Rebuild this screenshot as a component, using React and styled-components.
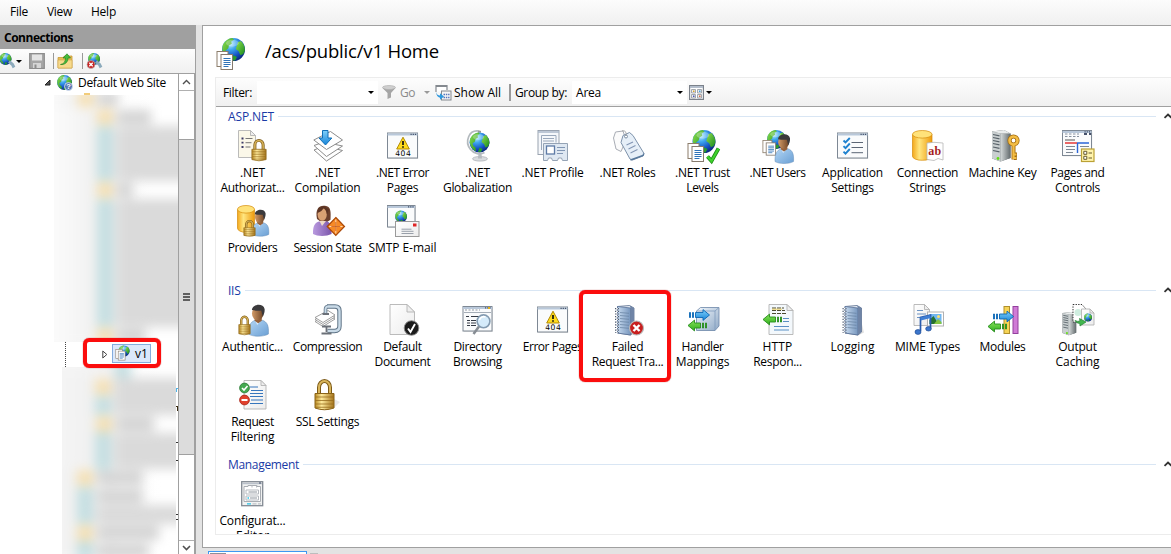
import React, { useLayoutEffect, useRef } from "react";
import styled, { createGlobalStyle } from "styled-components";

const GlobalStyle = createGlobalStyle`
  * { box-sizing: border-box; }
  html, body { margin: 0; height: 100%; overflow: hidden; }
  body {
    background: #e3e3e3;
    color: #000;
    font: 12px/15px "Open Sans", "Noto Sans", sans-serif;
  }
  #root { height: 100%; }
  svg { display: block; flex: none; }
`;

/* ---------- text set to a known advance width ---------- */

const TextSpan = styled.span`
  display: inline-block;
  white-space: nowrap;
`;

function Text({ w, children, className }) {
  const ref = useRef(null);
  useLayoutEffect(() => {
    const el = ref.current;
    el.style.letterSpacing = "0px";
    const natural = el.getBoundingClientRect().width;
    el.style.letterSpacing = `${(w - natural) / children.length}px`;
  }, [w, children]);
  return (
    <TextSpan ref={ref} className={className}>
      {children}
    </TextSpan>
  );
}

/* ---------- frame ---------- */

const Window = styled.div`
  display: flex;
  flex-direction: column;
  width: 1171px;
  height: 554px;
  overflow: hidden;
`;

const MenuBar = styled.nav`
  display: flex;
  flex: none;
  gap: 19px;
  height: 25px;
  padding: 4px 0 0 10px;
  background: linear-gradient(#fcfcfc, #f0f0f0);
`;

const Body = styled.div`
  display: flex;
  flex: 1;
  min-height: 0;
  gap: 6px;
`;

/* ---------- connections pane ---------- */

const Sidebar = styled.aside`
  position: relative;
  display: flex;
  flex-direction: column;
  flex: none;
  width: 196px;
  border-right: 1px solid #a0a0a0;
`;

const SidebarTitle = styled.h2`
  flex: none;
  height: 24px;
  margin: 0;
  padding: 5px 0 0 4px;
  background: #a0a0a0;
  font-size: 12px;
  line-height: 15px;
  font-weight: 700;
`;

const SideTools = styled.div`
  display: flex;
  flex: none;
  align-items: center;
  height: 25px;
  border-bottom: 1px solid #a0a0a0;
  background: linear-gradient(#fdfdfd, #f0f0f0);
`;

const ToolSlot = styled.div`
  flex: none;
  width: ${(p) => p.$w}px;
`;

const Separator = styled.i`
  flex: none;
  width: 1.5px;
  height: ${(p) => p.$h || 16}px;
  margin: 0 ${(p) => p.$right || 0}px 0 ${(p) => p.$left || 0}px;
  background: #999;
`;

const TreeArea = styled.div`
  display: flex;
  flex: 1;
  min-height: 0;
  background: #fff;
`;

const Tree = styled.div`
  flex: none;
  width: 178px;
  overflow: hidden;
`;

const TreeRow = styled.div`
  display: flex;
  align-items: center;
  height: ${(p) => p.$h}px;
  padding-left: ${(p) => p.$indent}px;
  gap: ${(p) => p.$gap || 0}px;
`;

const Guide = styled.i`
  flex: none;
  align-self: stretch;
  width: 0;
  margin-right: 36px;
  border-left: 1px dotted #444;
`;

const SelectedNode = styled.div`
  display: flex;
  align-items: center;
  gap: 4px;
  width: 39px;
  height: 19px;
  margin-top: -3px;
  padding-left: 2px;
  border: 1px solid #84acdd;
  background: #dbe8fb;
`;

const Hidden = styled.div`
  height: ${(p) => p.$h}px;
  margin-left: ${(p) => p.$left}px;
  width: ${(p) => p.$w}px;
  overflow: hidden;
  background: linear-gradient(90deg, #f8f8f8 0, #f6f6f6 18px, #fdfdfd 60px, #fff 100px);
`;

const HiddenRows = styled.div`
  margin: ${(p) => p.$top}px -20px 0 -20px;
  filter: blur(5.5px);
`;

const HiddenRow = styled.div`
  display: flex;
  align-items: center;
  height: 18.2px;
`;

const HiddenPad = styled.i`
  align-self: stretch;
  width: ${(p) => p.$w}px;
  background: linear-gradient(90deg, ${(p) => p.$from} 40%, #f0f0f0);
`;

const HiddenIcon = styled.i`
  width: 16px;
  height: ${(p) => (p.$folder ? 16 : 19)}px;
  background: ${(p) => (p.$folder ? "#f5e0b4" : "#c5dfe2")};
`;

const HiddenText = styled.i`
  width: ${(p) => p.$w}px;
  height: ${(p) => (p.$full ? 18.4 : 14)}px;
  border-left: 6px solid #e6e6e6;
  background: ${(p) => (p.$full ? "#dadada" : "#d3d3d3")};
`;

const ScrollBar = styled.div`
  display: flex;
  flex-direction: column;
  flex: none;
  width: 17px;
  border: solid #a0a0a0;
  border-width: 0 1px;
`;

const ScrollButton = styled.div`
  display: flex;
  align-items: center;
  justify-content: center;
  flex: none;
  height: ${(p) => p.$h}px;
  border: solid #b0b0b0;
  border-width: ${(p) => (p.$down ? "1px 0 0" : "0 0 1px")};
`;

const ScrollThumb = styled.div`
  display: flex;
  flex-direction: column;
  align-items: center;
  justify-content: center;
  gap: 1px;
  height: 316px;
  margin: 48px 0 auto;
  border: solid #a0a0a0;
  border-width: 1px 0;
  background: #dcdcdc;
`;

const Grip = styled.i`
  width: 7px;
  height: 2px;
  background: #606060;
`;

const Highlight = styled.div`
  position: absolute;
  left: ${(p) => p.$x}px;
  top: ${(p) => p.$y}px;
  width: ${(p) => p.$w}px;
  height: ${(p) => p.$h}px;
  border: 4px solid #fb0d0d;
  border-radius: 6px;
  box-shadow: 0 0 1px #a01010;
`;

const CutText = styled.svg`
  position: absolute;
  left: 176px;
  top: 350px;
`;

/* ---------- feature view ---------- */

const Main = styled.main`
  display: flex;
  flex-direction: column;
  flex: 1;
  min-width: 0;
`;

const Page = styled.section`
  flex: none;
  height: 523px;
  padding: 12px 0 0 12px;
  border: solid #a0a0a0;
  border-width: 1px 0 1px 1px;
  background: #fff;
`;

const PageHeader = styled.header`
  display: flex;
  gap: 17px;
  height: 39px;
  padding-left: 1px;
`;

const PageTitle = styled.h1`
  margin: 0;
  font-size: 18.5px;
  line-height: 26px;
  font-weight: 400;
`;

const Panel = styled.div`
  position: relative;
  height: 458px;
  border: solid #ececec;
  border-width: 1px 0 1px 1px;
`;

const FilterBar = styled.div`
  display: flex;
  align-items: center;
  height: 29px;
  padding-left: 7px;
  border-bottom: 1px solid #a0a0a0;
  background: linear-gradient(#fdfdfd, #f0f0f0);
`;

const Combo = styled.div`
  display: flex;
  align-items: center;
  justify-content: space-between;
  flex: none;
  width: ${(p) => p.$w}px;
  height: 23px;
  margin: 0 ${(p) => p.$after}px 0 5px;
  padding: 1px 4px 0;
  background: #fff;
`;

const GoLabel = styled(Text)`
  margin: 0 9px 0 4px;
  color: #8a8a8a;
`;

const ShowAllLabel = styled(Text)`
  margin: 0 8px 0 2px;
`;

const Features = styled.div`
  height: 427px;
  overflow: hidden;
`;

const Group = styled.section`
  height: 174px;
`;

const GroupHeader = styled.header`
  display: flex;
  align-items: center;
  gap: 4px;
  height: 20px;
  padding: 0 0 2px 12px;
  color: #1a3aa6;
`;

const Rule = styled.i`
  flex: 1;
  height: 1px;
  background: #d9e6f4;
`;

const Grid = styled.div`
  display: grid;
  grid-template-columns: repeat(12, 75px);
  grid-auto-rows: 75px;
  margin-left: -1px;
`;

const Item = styled.div`
  display: flex;
  flex-direction: column;
  align-items: center;
  padding-top: 3px;
`;

const Label = styled.div`
  display: flex;
  flex-direction: column;
  align-items: center;
  margin-top: 3px;
`;

const BottomTabs = styled.div`
  display: flex;
  align-items: flex-start;
  gap: 3px;
  padding: 3px 0 0 6px;
`;

const ActiveTab = styled.div`
  width: 99px;
  height: 10px;
  padding: 1px;
  border: 1px solid #3e98f2;
  background: #fff;
`;

const TabMark = styled.i`
  display: block;
  width: ${(p) => p.$w}px;
  height: 2px;
  margin-top: ${(p) => p.$top || 0}px;
  background: ${(p) => p.$c};
`;

/* ---------- icon parts ---------- */

const Defs = () => (
  <svg width="0" height="0">
    <defs>
      <radialGradient id="sea" cx="35%" cy="25%" r="75%">
        <stop offset="0" stopColor="#bff0ff" />
        <stop offset=".35" stopColor="#3fa6ee" />
        <stop offset=".75" stopColor="#1552c4" />
        <stop offset="1" stopColor="#0d2c86" />
      </radialGradient>
      <linearGradient id="land" x1="0" y1="0" x2="1" y2="1">
        <stop offset="0" stopColor="#8fe04e" />
        <stop offset="1" stopColor="#188a1e" />
      </linearGradient>
      <linearGradient id="brass" x1="0" x2="1">
        <stop offset="0" stopColor="#b98a22" />
        <stop offset=".35" stopColor="#ffeb9c" />
        <stop offset="1" stopColor="#a5741a" />
      </linearGradient>
      <linearGradient id="drum" x1="0" x2="1">
        <stop offset="0" stopColor="#f3a81c" />
        <stop offset=".35" stopColor="#ffe680" />
        <stop offset="1" stopColor="#ee9a0c" />
      </linearGradient>
      <linearGradient id="skin" x1="0" x2="1">
        <stop offset="0" stopColor="#d29a66" />
        <stop offset="1" stopColor="#6f4526" />
      </linearGradient>
      <linearGradient id="shirt" x1="0" y1="0" x2="1" y2="1">
        <stop offset="0" stopColor="#b4d6f4" />
        <stop offset="1" stopColor="#6a9fd4" />
      </linearGradient>
      <linearGradient id="violet" x1="0" x2="1">
        <stop offset="0" stopColor="#b99adf" />
        <stop offset="1" stopColor="#7b56ab" />
      </linearGradient>
      <linearGradient id="steel" x1="0" x2="1">
        <stop offset="0" stopColor="#d6dbdb" />
        <stop offset="1" stopColor="#626a6c" />
      </linearGradient>
      <linearGradient id="book" x1="0" x2="1">
        <stop offset="0" stopColor="#c6d9ee" />
        <stop offset="1" stopColor="#7796bd" />
      </linearGradient>
      <linearGradient id="paper" x1="0" y1="0" x2="1" y2="1">
        <stop offset="0" stopColor="#fff" />
        <stop offset="1" stopColor="#ececec" />
      </linearGradient>
      <linearGradient id="blueArrow" x1="0" y1="0" x2="0" y2="1">
        <stop offset="0" stopColor="#7fd0fa" />
        <stop offset="1" stopColor="#1683d8" />
      </linearGradient>
      <linearGradient id="greenArrow" x1="0" y1="0" x2="0" y2="1">
        <stop offset="0" stopColor="#86e25a" />
        <stop offset="1" stopColor="#2fae1d" />
      </linearGradient>
      <linearGradient id="cube" x1="0" y1="0" x2="1" y2="1">
        <stop offset="0" stopColor="#f2f7fc" />
        <stop offset="1" stopColor="#8fa9c6" />
      </linearGradient>
    </defs>
  </svg>
);

const Ico = ({ s = 32, box = 32, children }) => (
  <svg width={s} height={s} viewBox={`0 0 ${box} ${box}`} overflow="visible">
    {children}
  </svg>
);

const Globe = ({ x, y, r }) => (
  <g transform={`translate(${x} ${y}) scale(${r / 10})`}>
    <circle r="10" fill="url(#sea)" />
    <path
      d="M-9.6-2.5C-8.5-6.500-5-9.600-1-9.900L.5-8.500-2-7-1.500-5-4-3.500-4.500-1-7 1-6 3.500-4 5-3.500 8.700C-7.500 7-10.200 2.500-9.600-2.500Z"
      fill="url(#land)"
    />
    <path d="M4-6.500 6.500-7.500C9-5 10-2.500 9.900 1L8.500 4 6 5 4.500 1.500 2-.5 3-3.500Z" fill="url(#land)" />
    <path d="M0 5 3 6.500 1.500 9.500-1.500 9.500Z" fill="#2a9c2c" />
    <ellipse cx="-1" cy="-5.500" rx="5.500" ry="3" fill="#fff" opacity=".28" />
  </g>
);

const Padlock = ({ x, y, w, h }) => (
  <g transform={`translate(${x} ${y}) scale(${w / 20} ${h / 31})`}>
    <path d="M4.500 15V8.500a5.500 6.500 0 0 1 11 0V15" fill="none" stroke="#7c5a17" strokeWidth="4" />
    <path d="M4.500 15V8.500a5.500 6.500 0 0 1 11 0V15" fill="none" stroke="#d9b55a" strokeWidth="2" />
    <path d="M.5 14.500h19V29q-9.500 3.500-19 0Z" fill="url(#brass)" stroke="#8b6418" />
    <path d="M1 18h18M1 21.500h18M1 25h18M1 28.300h18" stroke="#94691a" strokeWidth="1.100" opacity=".75" />
  </g>
);

const Frame = ({ x = 0.5, y = 3, w = 30, h = 25 }) => (
  <g>
    <rect x={x + 0.7} y={y + 0.8} width={w} height={h} fill="#000" opacity=".15" />
    <rect x={x} y={y} width={w} height={h} fill="#fafbfc" stroke="#7e8894" />
    <path d={`M${x} ${y + 1.5}h${w}`} stroke="#b9c8da" strokeWidth="2" />
    <path d={`M${x + w - 7} ${y + 1.3}h6`} stroke="#44526b" strokeWidth="1.200" strokeDasharray="1.200 1" />
  </g>
);

const Warning404 = () => (
  <Ico>
    <Frame />
    <path d="M16 7.200 22.300 19H9.700Z" fill="#ffdc1c" stroke="#b28a05" strokeLinejoin="round" />
    <path d="M16 11v4M16 16.300v1.500" stroke="#111" strokeWidth="1.700" />
    <text x="16" y="26.400" fontSize="7.600" textAnchor="middle" textLength="15.500" fontFamily="DejaVu Sans">
      404
    </text>
  </Ico>
);

const Sheet = ({ x, y, w, h, fill = "url(#paper)", fold = 5 }) => (
  <g stroke="#b3b3b3" strokeWidth=".9">
    <path d={`M${x} ${y}h${w - fold}l${fold} ${fold}v${h - fold}h${-w}Z`} fill={fill} />
    <path d={`M${x + w - fold} ${y}v${fold}h${fold}Z`} fill="#eee" />
  </g>
);

const Pages2 = ({ x, y, k = 1 }) => (
  <g transform={`translate(${x} ${y}) scale(${k})`}>
    <rect x=".5" y=".5" width="11" height="15" fill="#fff" stroke="#8b7d6b" />
    <rect x="4.500" y="3.500" width="11.500" height="15" fill="#fff" stroke="#857a6e" />
    <path d="M7 7.500h7M7 9.500h7M7 11.500h7M7 13.500h7M7 15.500h5" stroke="#2e72b8" strokeWidth="1" />
  </g>
);

const Person = ({ x, y, k = 1 }) => (
  <g transform={`translate(${x} ${y}) scale(${k})`}>
    <path d="M0 29c-.3-8 2-12 6.500-13.500l7 0c5 1.500 6.500 5.500 6 13.500-5 2.800-15 2.800-19.500 0Z" fill="url(#shirt)" stroke="#5d88b4" strokeWidth=".5" />
    <path d="M6.500 15.500 8.500 20 12.500 15.500Z" fill="#dcecfa" />
    <path d="M6 12h7v4l-3.500 2.500-3.500-2.500Z" fill="#96613a" />
    <ellipse cx="9" cy="8.800" rx="5.600" ry="6.700" fill="url(#skin)" />
    <path d="M3.300 5.500C3.500-.4 14.500-2 15.800 4.500c.3 3-.8 5.500-1.800 7.500L12.500 6Q8 6.500 3.300 5.500Z" fill="#3b3a3c" />
  </g>
);

const Drum = ({ x, y, w, h }) => (
  <g transform={`translate(${x} ${y})`} stroke="#d58c0d" strokeWidth=".7">
    <path d={`M0 4v${h - 8}a${w / 2} 4 0 0 0 ${w} 0V4`} fill="url(#drum)" />
    <ellipse cx={w / 2} cy="4" rx={w / 2} ry="3.800" fill="#ffe27a" />
  </g>
);

const Server = ({ x, y, k = 1 }) => (
  <g transform={`translate(${x} ${y}) scale(${k})`}>
    <path d="M0 1.500 12 0 18.500 3.500V28L8.500 31.500 0 28.500Z" fill="#5d6568" />
    <path d="M0 1.500 8.500 3.500V31.500L0 28.500Z" fill="#c9cfd0" />
    <path d="M1 4.500l6.500 1.300M1 7.500l6.500 1.300M1 10.500l6.500 1.300M1 13.500l6.500 1.300M1 17l6.500 1.300M1 20.500l6.500 1.300" stroke="#59636a" strokeWidth="1.200" />
    <path d="M8.500 3.500 18.500 3.500V28L8.500 31.500Z" fill="url(#steel)" />
    <path d="M0 1.500 12 0 18.500 3.500 8.500 3.500Z" fill="#e9ecec" />
    <circle cx="6" cy="28.500" r="1.400" fill="#63dd14" />
  </g>
);

const Notebook = ({ x }) => (
  <g transform={`translate(${x} 1.500)`}>
    <path d="M16 2 22 27l-6 3Z" fill="#000" opacity=".12" />
    <path d="M3 1 15 0 19.500 2.500V26.500L16 29.500 3 27.500Z" fill="#e8eef6" stroke="#56698a" strokeWidth=".8" />
    <path d="M3 1 16 2.500V29.500L3 27.500Z" fill="url(#book)" stroke="#587096" strokeWidth=".8" />
    <path d="M15 0l4.500 2.500V26.500L16 29.500V2.500Z" fill="#6f84a6" />
    <path d="M5.500 7l9 .8M5.500 10l9 .8M5.500 13l9 .8M5.500 16l9 .8M5.500 19l9 .8M5.500 22l9 .8" stroke="#64809f" strokeWidth=".7" />
    <path d="M2.500 2.500v25" stroke="#4e5b70" strokeWidth="4" strokeDasharray="1.200 1.500" />
    <path d="M2.500 2.500v25" stroke="#fff" strokeWidth="1.600" strokeDasharray="1.200 1.500" />
  </g>
);

const ArrowRight = ({ x, y }) => (
  <g transform={`translate(${x} ${y})`} fill="url(#blueArrow)" stroke="#0c66b4" strokeWidth=".9">
    <path d="M6 3.500h7.500V.6L20 6l-6.500 5.400V8.500H6Z" />
    <path d="M0 3.500h1v5H0ZM3 3.500h1v5H3Z" />
  </g>
);

const ArrowLeft = ({ x, y }) => (
  <g transform={`translate(${x} ${y})`} fill="url(#greenArrow)" stroke="#278c1e" strokeWidth=".9">
    <path d="M13 3.500H7V.6L.5 6 7 11.400V8.500h6Z" />
    <path d="M15 3.500h1v5h-1ZM18 3.500h1v5h-1Z" />
  </g>
);

const ErrorBadge = ({ x, y, r }) => (
  <g transform={`translate(${x} ${y}) scale(${r / 7})`}>
    <circle r="7" fill="#c81f1f" stroke="#b9b9b9" strokeWidth="1.200" />
    <path d="M-3-3 3 3M3-3-3 3" stroke="#fff" strokeWidth="2.400" />
  </g>
);

/* ---------- feature icons ---------- */

const icons = {
  authorization: (
    <Ico>
      <Sheet x={1.5} y={0.5} w={17} h={27} fill="#fbf8e9" />
      <path d="M8.500 8.500h7M8.500 12.700h6M8.500 17h5" stroke="#777" />
      <path d="M4.500 8.500h2M4.500 12.700h2M4.500 17h2" stroke="#3c3a66" strokeWidth="1.800" />
      <Padlock x={14.500} y={9} w={15} h={22} />
    </Ico>
  ),
  compilation: (
    <Ico>
      <g fill="#fff" stroke="#8c8c8c" strokeLinejoin="round">
        <path d="M2 20 12 16 30.500 20.500 14.500 31Z" />
        <path d="M2 15.500 12 12 30.500 16 14.500 26.500Z" />
        <path d="M1.800 10 18.500 1.500 30.500 10 14.500 19.500Z" />
      </g>
      <path d="M10.500.5h5.500v7.500h3.800L13.500 15 7 8h3.500Z" fill="url(#blueArrow)" stroke="#0f6fb9" />
    </Ico>
  ),
  errorPages: <Warning404 />,
  globalization: (
    <Ico>
      <ellipse cx="18" cy="28.800" rx="7.500" ry="2.300" fill="#d9dcdf" stroke="#a9aeb3" strokeWidth=".7" />
      <path d="M16.500 24h3l.6 4.500h-4.200Z" fill="#b7bcc2" />
      <path d="M17.500 1.200C6.500-.8 2.500 12 8.500 19.500c3.500 4.500 10 5.500 14 3" fill="none" stroke="#b4babf" strokeWidth="1.700" />
      <path d="M16 .8h3v2h-3Z" fill="#999" />
      <Globe x={17.500} y={12.500} r={10} />
    </Ico>
  ),
  profile: (
    <Ico>
      <rect x="1" y=".5" width="21" height="24" fill="#f5f7fa" stroke="#9aa3b0" />
      <path d="M1 2h21" stroke="#aab7c8" strokeWidth="1.500" />
      <path d="M4.500 20V5.500h14.500v7M6 8.500h11M6 11h11" fill="none" stroke="#9aa8bb" />
      <path d="M6.500 13.500h24v17h-5l-1-2.500h-3l-1 2.500h-5l-1-2.500h-3l-1 2.500h-4Z" fill="#dfe8f2" stroke="#95a3b5" />
      <rect x="9.500" y="16" width="8" height="8" fill="#fff" stroke="#5e7ba6" strokeWidth="1.300" />
      <path d="M20 17.500h8M20 20.500h8M20 23.500h6" stroke="#8196b4" />
    </Ico>
  ),
  roles: (
    <Ico>
      <path d="M3.500 2 11 1l3 9-5 11.500-5-2.500-2.500-11Z" fill="#fbfbfb" stroke="#a9adb5" />
      <path d="M9 12.500 11 5.500l6.500-3 3.500 3 11 18-1 2.500-10.500 4-2.500-1Z" fill="#e6eff8" stroke="#7d92ab" strokeLinejoin="round" />
      <path d="M18.500 30 31 25.500l.8-2" fill="none" stroke="#57789c" strokeWidth="1.400" />
      <circle cx="14" cy="6.500" r="1.500" fill="#fff" stroke="#7c8ea3" />
      <path d="M14 6Q15 0 10 .8" fill="none" stroke="#999" strokeWidth=".8" />
      <path d="M14.500 15 21 12M16.500 19 23.500 15.500M18.500 23 25.500 19.500" stroke="#8295b4" strokeWidth="1.100" />
    </Ico>
  ),
  trust: (
    <Ico>
      <Globe x={17} y={11.500} r={11.500} />
      <Pages2 x={0.500} y={13} />
      <path d="M20.500 26.500 24.500 31 31.500 18.500" fill="none" stroke="#1b8d14" strokeWidth="3.800" />
      <path d="M20.500 26.500 24.500 31 31.500 18.500" fill="none" stroke="#3fd22c" strokeWidth="2.200" />
    </Ico>
  ),
  users: (
    <Ico>
      <Globe x={14.500} y={9.500} r={9.500} />
      <Pages2 x={0.500} y={10} k={0.82} />
      <Person x={13} y={4} k={0.95} />
    </Ico>
  ),
  appSettings: (
    <Ico>
      <Frame />
      <path d="M14.500 12.500H26M14.500 17.500H26M14.500 22.700H26" stroke="#5c6675" />
      <path d="M6.500 10.500 8.500 12.500 12.800 8M6.500 16.200 8.500 18.200 12.800 13.500M6.500 21.700 8.500 23.700 12.800 19" fill="none" stroke="#1f82cf" strokeWidth="1.900" />
    </Ico>
  ),
  connection: (
    <Ico>
      <Drum x={0.500} y={0.300} w={19.500} h={30} />
      <path d="M15 13l7-.7 9 .7v17l-5-1.500-4 2-7-1Z" fill="#fff" stroke="#b5b5b5" strokeWidth=".8" />
      <text x="22.800" y="25" fontSize="12" fontWeight="700" textAnchor="middle" textLength="13" fill="#a51d1d" fontFamily="Liberation Serif">
        ab
      </text>
    </Ico>
  ),
  machineKey: (
    <Ico>
      <Server x={5} y={0} />
      <circle cx="26.500" cy="10.500" r="4" fill="none" stroke="#a36d10" strokeWidth="4.200" />
      <path d="M26.500 14v15.500M27 24.500h3M27 28h2.800" stroke="#a36d10" strokeWidth="4" />
      <circle cx="26.500" cy="10.500" r="4" fill="none" stroke="#f4bd44" strokeWidth="2.600" />
      <path d="M26.500 14v15M27 24.500h2.500M27 28h2.300" stroke="#f4bd44" strokeWidth="2.200" />
    </Ico>
  ),
  controls: (
    <Ico>
      <Frame x={0.500} y={0.500} w={29} h={25} />
      <path d="M3 4h14M3 6.500h14" stroke="#8791a0" strokeDasharray="2.500 1.500" />
      <path d="M22 4h3M27 4h2" stroke="#44506a" strokeWidth="2" />
      <path d="M3 10h10" stroke="#555" />
      <path d="M3 13h12" stroke="#e22929" strokeWidth="1.400" />
      <path d="M15 13h12M15.500 13v10" stroke="#2b65d6" strokeWidth="1.400" />
      <path d="M4 16.500h9M4 19.500h9M4 22.500h7M18 16.500h9" stroke="#7d8794" />
      <rect x="19.500" y="19" width="12.500" height="12.500" fill="#fff3ac" stroke="#bba135" strokeWidth="1.200" />
      <path d="M21.800 21.300h3v3h-3ZM21.800 26.300h3v3h-3Z" fill="#fff" stroke="#66592c" />
      <path d="M26.500 23h3.500M26.500 28h3.500" stroke="#66592c" />
    </Ico>
  ),
  providers: (
    <Ico>
      <Drum x={0.500} y={0.300} w={17} h={27} />
      <Person x={15} y={4.500} k={0.86} />
      <Padlock x={6.500} y={15} w={12} h={16.500} />
    </Ico>
  ),
  session: (
    <Ico>
      <path d="M5 14C3 4 7 0 13 .8c6 .5 6 6 5.500 14L12 19Z" fill="#6b3f2c" />
      <path d="M1 29c-.3-8 2-11.500 6-12.500l7.500-.3c4 1 5.500 5 5 12.800-5 2.600-14 2.600-18.500 0Z" fill="url(#violet)" />
      <path d="M7.500 16 10 21l4-5Z" fill="#efdac6" />
      <ellipse cx="10.200" cy="9.500" rx="4.600" ry="6.300" fill="#d9a173" />
      <path d="M5.500 8Q10 6.500 12 2.500q2.500 3 3 7l2-5-5-3.500-5.500 2Z" fill="#5b3424" />
      <path d="M23.800 12.500 32.500 21.500 23.800 30.500 15.200 21.500Z" fill="#f78a26" stroke="#a94808" strokeWidth="1.200" />
      <path d="M23.800 14.500v14M17.200 21.500h13.400" stroke="#ffe1bd" strokeWidth=".9" />
      <path d="M23.800 17v9M19.300 21.500h9" stroke="#c75612" strokeWidth=".8" />
    </Ico>
  ),
  smtp: (
    <Ico>
      <Frame x={0.500} y={0.500} w={27.500} h={21.500} />
      <Globe x={14} y={11.500} r={6} />
      <rect x="8.500" y="16.500" width="23.500" height="15" fill="url(#paper)" stroke="#9a9a9a" />
      <path d="M26 18.500h3.500v3H26Z" fill="#e02525" />
      <path d="M14.500 24.200h10M14.500 26.300h12M14.500 28.500h12" stroke="#8d95a0" strokeWidth=".9" />
    </Ico>
  ),
  authentication: (
    <Ico>
      <Person x={11.500} y={0.500} k={1.020} />
      <Padlock x={1.500} y={11.500} w={12} h={19.500} />
    </Ico>
  ),
  compression: (
    <Ico>
      <path d="M15 2.500h8q4.500 0 4.500 4.500v15q0 5-5 5h-7" fill="none" stroke="#5e7386" strokeWidth="4.400" />
      <path d="M15 2.500h8q4.500 0 4.500 4.500v15q0 5-5 5h-7" fill="none" stroke="#c9dae7" strokeWidth="2.400" />
      <g fill="#fff" stroke="#929292" strokeWidth=".9">
        <path d="M3 17.500 16 10.500l7 4.500-12 7.500Z" />
        <path d="M3 15.500 16 8.500l7 4.500-12 7.500Z" />
        <path d="M3 13.500 16 6.500l7 4.500-12 7.500Z" />
      </g>
      <path d="M13.500 10V5.500Q13.500 2.500 16 2.500" fill="none" stroke="#6d8294" strokeWidth="3.600" />
      <path d="M13.500 9.500V5.500Q13.500 2.500 16 2.500" fill="none" stroke="#c9dae7" strokeWidth="1.800" />
      <path d="M10.500 10h6.500M14.500 22v6M10 22.500h9M9.500 29.500h10" stroke="#6b7078" strokeWidth="1.800" />
    </Ico>
  ),
  defaultDoc: (
    <Ico>
      <Sheet x={3} y={0.500} w={24.500} h={30} fold={7.500} />
      <circle cx="24.500" cy="24" r="7.300" fill="#1b1b1b" stroke="#8b8b8b" strokeWidth=".9" />
      <path d="M21 24.500l2.500 3.500 4.500-8" fill="none" stroke="#fff" strokeWidth="1.900" />
    </Ico>
  ),
  directory: (
    <Ico>
      <Frame x={1} y={2.500} w={29} h={24.500} />
      <path d="M3 6h15" stroke="#8f97a1" strokeDasharray="2 1.500" />
      <path d="M2 8.500h27" stroke="#a5adb7" />
      <path d="M26 3h2v2h-2Z" fill="#e3b21c" />
      <path d="M4 12.500h3M9 12.500h8M5 16.500h3M9 16.500h5M5 19h3M9 19h5M5 21.500h3M9 21.500h5" stroke="#353b45" strokeWidth="1.100" />
      <circle cx="21.500" cy="17.300" r="6.400" fill="#d5ebfa" stroke="#849bb1" strokeWidth="1.600" />
      <path d="M17.500 16a4.500 4.500 0 0 1 6-3" fill="none" stroke="#fff" strokeWidth="1.600" />
      <path d="M17 22.500 11.500 30" stroke="#878d94" strokeWidth="2.500" />
    </Ico>
  ),
  failed: (
    <Ico>
      <Notebook x={2.500} />
      <ErrorBadge x={24.500} y={24} r={7} />
    </Ico>
  ),
  handler: (
    <Ico>
      <path d="M9.500 7 13.500 3.500H32V22l-4 4.500H9.500Z" fill="url(#cube)" stroke="#6c87a8" strokeWidth=".8" />
      <path d="M9.500 7H28V26.500M28 7 32 3.500" fill="none" stroke="#7f9abb" strokeWidth=".8" />
      <ArrowRight x={2.500} y={5} />
      <ArrowLeft x={0.500} y={15.500} />
    </Ico>
  ),
  http: (
    <Ico>
      <Sheet x={7} y={0.500} w={24} h={30} fill="#f3f8fc" fold={6} />
      <path d="M10 4h12M10 6.500h13M10 9.500h15" stroke="#4c4a31" strokeWidth="1.200" strokeDasharray="4 1" />
      <path d="M10 5.200h10" stroke="#ecc73d" strokeWidth=".8" />
      <path d="M21 14.500h6M21 17.500h6M12 22.500h15M12 26h15" stroke="#5b8fc4" strokeWidth="1.100" />
      <ArrowLeft x={0.500} y={9.500} />
    </Ico>
  ),
  logging: (
    <Ico>
      <Notebook x={5} />
    </Ico>
  ),
  mime: (
    <Ico>
      <Sheet x={2} y={0.500} w={15.500} h={21} />
      <path d="M5 6.500h6M5 10h9M5 13.500h9" stroke="#6c93c3" />
      <rect x="15.500" y="8" width="16" height="14" fill="#fff" stroke="#b1b1b1" />
      <rect x="17.500" y="10" width="12" height="10" fill="#70b6ef" />
      <path d="M17.500 20v-4l4-4 5 8Z" fill="#26702e" />
      <path d="M22 20l4-5 3.500 3v2Z" fill="#83c441" />
      <circle cx="26.500" cy="12.500" r="1.500" fill="#ffe26b" />
      <path d="M8.500 27V13.500L18.500 11v13.500" fill="none" stroke="#295cae" strokeWidth="1.700" />
      <path d="M8.500 15 18.500 12.500" stroke="#3f7ed4" strokeWidth="3" />
      <ellipse cx="6" cy="28" rx="3" ry="2.400" fill="#3b76cc" stroke="#214c94" strokeWidth=".7" />
      <ellipse cx="16.500" cy="24.800" rx="2.800" ry="2.200" fill="#3b76cc" stroke="#214c94" strokeWidth=".7" />
    </Ico>
  ),
  modules: (
    <Ico>
      <rect x="17" y="2.500" width="5.500" height="27" fill="#f6d456" stroke="#b0902c" />
      <rect x="26" y="2.500" width="5" height="27" fill="#d07bd6" stroke="#93409d" />
      <ArrowRight x={6.500} y={6.500} />
      <ArrowLeft x={0.500} y={16.500} />
    </Ico>
  ),
  caching: (
    <Ico>
      <Server x={0.500} y={8} k={0.740} />
      <path d="M11 .5h9l3.500 4V18H11Z" fill="#fff" stroke="#333" strokeDasharray="1.300 1.300" />
      <circle cx="16" cy="8.500" r="3.500" fill="#cfeee0" />
      <Sheet x={19.500} y={5} w={12.500} h={16} fold={4} />
      <Globe x={26} y={13.500} r={4} />
      <path d="M13 16.500q3 1.500 5 .5l-.5-2.500L24 18l-6 4-.2-2.500q-3.300 0-4.800-3Z" fill="#42b74e" stroke="#278135" strokeWidth=".7" />
    </Ico>
  ),
  filtering: (
    <Ico>
      <Sheet x={7} y={1.500} w={22} h={28.500} />
      <path d="M13 8h8M14 11.500h12M13 14.500h13M13 17.500h13M14 21h12M13 24.500h13" stroke="#3676bd" strokeWidth="1.200" />
      <circle cx="7.500" cy="9" r="4.900" fill="#45aa51" stroke="#2c7b37" strokeWidth=".8" />
      <path d="M5 9l2 2 3.500-4" fill="none" stroke="#fff" strokeWidth="1.600" />
      <circle cx="7.500" cy="21" r="4.900" fill="#e0402c" stroke="#a72518" strokeWidth=".8" />
      <path d="M4.500 21h6" stroke="#fff" strokeWidth="2" />
    </Ico>
  ),
  ssl: (
    <Ico>
      <path d="M22 20l6 3-6 6Z" fill="#000" opacity=".09" />
      <Padlock x={2.500} y={0} w={20} h={31} />
    </Ico>
  ),
  config: (
    <Ico>
      <rect x="4.700" y="3.700" width="21" height="24" fill="#f1f2f2" stroke="#838a93" strokeWidth="1.300" />
      <path d="M5 5.500h20" stroke="#b9c0ca" strokeWidth="1.500" />
      <path d="M22 5h2" stroke="#3e4a64" strokeWidth="1.200" />
      <path d="M7 8.500h4v-1h9v1h3.500v15H7Z" fill="#fff" stroke="#a9adb3" />
      <path d="M15 7.500v2M19.500 7.500v2M9 12h12.500v4H9ZM9 18h12.500v4H9Z" fill="none" stroke="#b5b9bf" />
      <path d="M11.500 14H20M13 20h7" stroke="#8d949d" />
      <path d="M10.500 20h1.500M10 25.800h4" stroke="#29c2e6" strokeWidth="1.300" />
      <path d="M15.500 25.800h4M21 25.800h3" stroke="#c0c3c7" strokeWidth="1.200" />
    </Ico>
  ),
};

/* ---------- small icons ---------- */

const Down = ({ c = "#000" }) => (
  <svg width="6" height="3" viewBox="0 0 6 3">
    <path d="M0 0h6L3 3Z" fill={c} />
  </svg>
);

const Caret = () => (
  <svg width="11" height="6" viewBox="0 0 11 6">
    <path d="M4.500 4.800 8 1.500 11.500 4.800" fill="none" stroke="#333" strokeWidth="1.800" />
  </svg>
);

const Plug = () => <path d="M9 8.500l3.500 3 1.500 3" fill="none" stroke="#8caabc" strokeWidth="3" />;

const ConnectIcon = () => (
  <Ico s={16} box={16}>
    <Globe x={5.500} y={6} r={6} />
    <Plug />
  </Ico>
);

const SaveIcon = () => (
  <Ico s={16} box={16}>
    <path d="M.7.700h14.600v14.600H.7Z" fill="#a6a6a6" stroke="#8d8d8d" strokeWidth="1.200" />
    <path d="M3 1.500h10v6H3Z" fill="#e4e4e4" />
    <path d="M4 10h8v5H4Z" fill="#d6d6d6" />
    <path d="M5.500 11.500h2V15h-2Z" fill="#8d8d8d" />
  </Ico>
);

const FolderUpIcon = () => (
  <Ico s={16} box={16}>
    <path d="M1 4.500h5l1.500-1.500H15V15H1Z" fill="#e8bd55" stroke="#c99a37" strokeWidth=".8" />
    <path d="M1 7h14v8H1Z" fill="#f7da8c" stroke="#d0a448" strokeWidth=".6" />
    <path d="M3.500 11.500C7 11 8.500 8.500 8.500 5H6L10 .8 13.500 5H11c0 4-3 7-7.500 6.500Z" fill="#46bd3c" stroke="#258522" strokeWidth=".7" />
  </Ico>
);

const DisconnectIcon = () => (
  <Ico s={16} box={16}>
    <Globe x={7} y={6} r={6} />
    <Plug />
    <ErrorBadge x={4} y={11.500} r={4} />
  </Ico>
);

const SiteIcon = () => (
  <Ico s={16} box={16}>
    <Globe x={7.500} y={7.500} r={7.500} />
    <circle cx="11.500" cy="11.500" r="4" fill="#5878b5" stroke="#dce4f2" strokeWidth=".8" />
    <text x="11.500" y="14.300" fontSize="7.500" fontWeight="700" fill="#fff" textAnchor="middle" fontFamily="Liberation Sans">
      ?
    </text>
  </Ico>
);

const AppIcon = () => (
  <Ico s={16} box={16}>
    <Globe x={9} y={6} r={5.600} />
    <Pages2 x={0.500} y={4} k={0.600} />
  </Ico>
);

const FunnelIcon = () => (
  <Ico s={14} box={14}>
    <ellipse cx="7" cy="2.500" rx="6.500" ry="2" fill="#cfcfcf" stroke="#aaa" strokeWidth=".6" />
    <path d="M.5 3Q7 6 13.500 3L9 8v4.500L5.500 14V8Z" fill="#a5a5a5" />
  </Ico>
);

const ShowAllIcon = () => (
  <Ico s={17} box={17}>
    <path d="M1 8V1.500h11V6" fill="#fff" stroke="#84898f" strokeWidth="1.200" />
    <path d="M1 2.500h11" stroke="#84898f" />
    <rect x="6.500" y="7" width="9.500" height="9" fill="#f5f5f5" stroke="#84898f" />
    <path d="M8.500 10.500h6M8.500 13.500h6" stroke="#5576bd" strokeWidth="1.500" strokeDasharray="1.500 .8" />
    <path d="M1 8q1 3.500 4 3.500V9.200l4 3.300-4 3.200v-2Q1.500 13 1 8Z" fill="#2e98dd" />
  </Ico>
);

const ViewIcon = () => (
  <Ico s={15} box={15}>
    <rect x=".6" y=".6" width="13.800" height="13.800" fill="#fff" stroke="#7b818a" strokeWidth="1.200" />
    <path d="M1 2h13" stroke="#adb8c8" strokeWidth="1.800" />
    <path d="M2.500 4.500h4v3.500h-4ZM8.500 4.500h4v3.500h-4ZM2.500 9.500h4V13h-4ZM8.500 9.500h4V13h-4Z" fill="#eee" stroke="#9a9fa6" strokeWidth=".9" />
    <path d="M4 6.300h1.500" stroke="#d6a52e" strokeWidth="1.500" />
    <path d="M10 6.300h1.500" stroke="#3fa0de" strokeWidth="1.500" />
    <path d="M4 11.300h1.500" stroke="#4556b5" strokeWidth="1.500" />
    <path d="M10 11.300h1.500" stroke="#d86b48" strokeWidth="1.500" />
  </Ico>
);

/* ---------- data ---------- */

const groups = [
  {
    title: ["ASP.NET", 46],
    items: [
      ["authorization", [".NET", 25], ["Authorizat...", 64]],
      ["compilation", [".NET", 25], ["Compilation", 66]],
      ["errorPages", [".NET Error", 53], ["Pages", 31.5]],
      ["globalization", [".NET", 25], ["Globalization", 69]],
      ["profile", [".NET Profile", 62]],
      ["roles", [".NET Roles", 56]],
      ["trust", [".NET Trust", 55], ["Levels", 32.5]],
      ["users", [".NET Users", 56]],
      ["appSettings", ["Application", 61], ["Settings", 42.5]],
      ["connection", ["Connection", 61.5], ["Strings", 36.5]],
      ["machineKey", ["Machine Key", 68]],
      ["controls", ["Pages and", 54], ["Controls", 45]],
      ["providers", ["Providers", 49.5]],
      ["session", ["Session State", 68]],
      ["smtp", ["SMTP E-mail", 68]],
    ],
  },
  {
    title: ["IIS", 12.5],
    items: [
      ["authentication", ["Authentic...", 61]],
      ["compression", ["Compression", 69.5]],
      ["defaultDoc", ["Default", 38.5], ["Document", 56]],
      ["directory", ["Directory", 48], ["Browsing", 49]],
      ["errorPages", ["Error Pages", 59.5]],
      ["failed", ["Failed", 31.5], ["Request Tra...", 71.5]],
      ["handler", ["Handler", 42], ["Mappings", 53.5]],
      ["http", ["HTTP", 30], ["Respon...", 48.5]],
      ["logging", ["Logging", 44]],
      ["mime", ["MIME Types", 65]],
      ["modules", ["Modules", 46]],
      ["caching", ["Output", 38.5], ["Caching", 44]],
      ["filtering", ["Request", 42.5], ["Filtering", 43.5]],
      ["ssl", ["SSL Settings", 63.5]],
    ],
  },
  {
    title: ["Management", 71],
    items: [["config", ["Configurat...", 66], ["Editor", 33]]],
  },
];

/* [indent, folder, text width, runs past the edge] */
const upperRows = [
  [44, 1, 24, 0],
  [63, 1, 38, 0],
  [63, 0, 86, 1],
  [63, 0, 86, 1],
  [63, 0, 86, 1],
  [63, 1, 20, 0],
  [63, 0, 86, 1],
  [63, 0, 86, 1],
  [63, 0, 86, 1],
  [63, 0, 86, 1],
  [63, 0, 86, 1],
  [63, 0, 86, 1],
  [63, 0, 86, 1],
  [63, 1, 33, 0],
];

const lowerRows = [
  [73, 0, 0, 0],
  [54, 1, 86, 1],
  [54, 0, 86, 1],
  [54, 1, 42, 0],
  [54, 0, 86, 1],
  [54, 0, 86, 1],
  [35, 1, 50, 0],
  [35, 0, 50, 0],
  [35, 0, 100, 1],
  [35, 1, 66, 0],
  [35, 0, 56, 0],
];

const HiddenBranch = ({ rows, height, left, width, top, from }) => (
  <Hidden $h={height} $left={left} $w={width}>
    <HiddenRows $top={top}>
      {rows.map(([indent, folder, w, full], i) => (
        <HiddenRow key={i}>
          <HiddenPad $w={indent} $from={from} />
          <HiddenIcon $folder={folder} />
          {w > 0 && <HiddenText $w={w} $full={full} />}
        </HiddenRow>
      ))}
    </HiddenRows>
  </Hidden>
);

const Connections = () => (
  <Sidebar>
    <SidebarTitle>
      <Text w={69}>Connections</Text>
    </SidebarTitle>
    <SideTools>
      <ToolSlot $w={16}>
        <ConnectIcon />
      </ToolSlot>
      <ToolSlot $w={13}>
        <Down />
      </ToolSlot>
      <SaveIcon />
      <Separator $left={7.5} $right={3} />
      <FolderUpIcon />
      <Separator $left={8.5} $right={4} />
      <DisconnectIcon />
    </SideTools>
    <TreeArea>
      <Tree>
        <TreeRow $h={17} $indent={44}>
          <ToolSlot $w={13}>
            <svg width="7" height="7" viewBox="0 0 7 7">
              <path d="M6 1v5H1Z" fill="#555" stroke="#222" />
            </svg>
          </ToolSlot>
          <ToolSlot $w={21}>
            <SiteIcon />
          </ToolSlot>
          <Text w={88}>Default Web Site</Text>
        </TreeRow>
        <TreeRow $h={4} $indent={84}>
          <TabMark $w={6} $c="#f2cc7a" $top={2} />
        </TreeRow>
        <HiddenBranch rows={upperRows} height={247} left={54} width={124} top={-5} from="#fafafa" />
        <TreeRow $h={25} $indent={65}>
          <Guide />
          <ToolSlot $w={10}>
            <svg width="6" height="9" viewBox="0 0 6 9">
              <path d="M.8 1v7L4.800 4.500Z" fill="#fff" stroke="#444" />
            </svg>
          </ToolSlot>
          <SelectedNode>
            <AppIcon />
            <Text w={13}>v1</Text>
          </SelectedNode>
        </TreeRow>
        <HiddenBranch rows={lowerRows} height={187} left={62} width={114} top={-7} from="#f4f4f4" />
      </Tree>
      <ScrollBar>
        <ScrollButton $h={17}>
          <svg width="9" height="6" viewBox="0 0 9 6">
            <path d="M1 5 4.500 1.500 8 5" fill="none" stroke="#505050" strokeWidth="1.400" />
          </svg>
        </ScrollButton>
        <ScrollThumb>
          <Grip />
          <Grip />
          <Grip />
        </ScrollThumb>
        <ScrollButton $h={14} $down>
          <svg width="9" height="6" viewBox="0 0 9 6">
            <path d="M1 1 4.500 4.500 8 1" fill="none" stroke="#505050" strokeWidth="1.600" />
          </svg>
        </ScrollButton>
      </ScrollBar>
    </TreeArea>
    <CutText width="2" height="170" viewBox="0 0 2 170">
      <path d="M.5 13.500H2M.5 13v4" stroke="#4fb4e8" />
      <path d="M0 31.500h2M1.500 31v5" stroke="#3a2b10" />
      <path d="M0 67.500h2M0 85.500h2M0 139.500h2M0 144.500h2" stroke="#333" />
    </CutText>
    <Highlight $x={83} $y={313} $w={78} $h={30} />
  </Sidebar>
);

const Feature = ({ icon, lines }) => (
  <Item>
    {icons[icon]}
    <Label>
      {lines.map(([text, w]) => (
        <Text key={text} w={w}>
          {text}
        </Text>
      ))}
    </Label>
  </Item>
);

export default function App() {
  return (
    <Window>
      <GlobalStyle />
      <MenuBar>
        <Text w={18}>File</Text>
        <Text w={25}>View</Text>
        <Text w={25}>Help</Text>
      </MenuBar>
      <Body>
        <Connections />
        <Main>
          <Page>
            <PageHeader>
              <Ico>
                <Globe x={17.500} y={11.500} r={11.500} />
                <Pages2 x={0.500} y={13} />
              </Ico>
              <PageTitle>
                <Text w={174}>/acs/public/v1 Home</Text>
              </PageTitle>
            </PageHeader>
            <Panel>
              <FilterBar>
                <Text w={29}>Filter:</Text>
                <Combo $w={121} $after={4}>
                  <span />
                  <Down />
                </Combo>
                <FunnelIcon />
                <GoLabel w={15}>Go</GoLabel>
                <ToolSlot $w={11}>
                  <Down c="#999" />
                </ToolSlot>
                <ShowAllIcon />
                <ShowAllLabel w={47}>Show All</ShowAllLabel>
                <Separator $h={17} $right={4.5} />
                <Text w={52}>Group by:</Text>
                <Combo $w={115} $after={2}>
                  <Text w={25}>Area</Text>
                  <Down />
                </Combo>
                <ToolSlot $w={17}>
                  <ViewIcon />
                </ToolSlot>
                <Down />
              </FilterBar>
              <Features>
                {groups.map(({ title, items }) => (
                  <Group key={title[0]}>
                    <GroupHeader>
                      <Text w={title[1]}>{title[0]}</Text>
                      <Rule />
                      <Caret />
                    </GroupHeader>
                    <Grid>
                      {items.map(([icon, ...lines]) => (
                        <Feature key={icon} icon={icon} lines={lines} />
                      ))}
                    </Grid>
                  </Group>
                ))}
              </Features>
              <Highlight $x={362.5} $y={212} $w={92} $h={92} />
            </Panel>
          </Page>
          <BottomTabs>
            <ActiveTab>
              <TabMark $w={16} $c="#8f8f98" />
            </ActiveTab>
            <TabMark $w={8} $c="#bdbdbd" $top={2} />
          </BottomTabs>
        </Main>
      </Body>
      <Defs />
    </Window>
  );
}
